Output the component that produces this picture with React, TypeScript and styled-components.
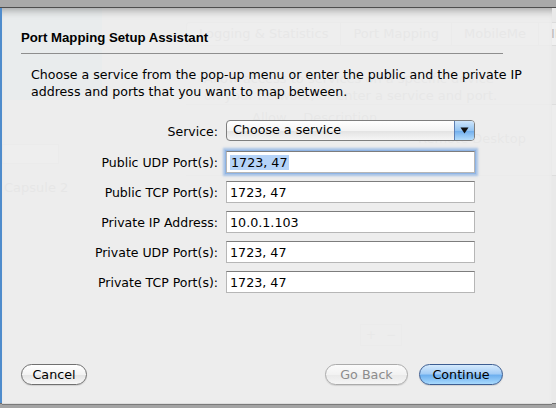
import React from 'react';
import styled, { createGlobalStyle } from 'styled-components';

const GlobalStyle = createGlobalStyle`
	html, body {
		margin: 0;
		padding: 0;
		background: #a4a4a4;
	}
	body {
		font-family: "DejaVu Sans", "Liberation Sans", sans-serif;
	}
`;

const Screen = styled.div`
	position: relative;
	width: 556px;
	height: 408px;
	overflow: hidden;
	background: #a4a4a4;
`;

/* the preferences window behind the sheet */
const BackWindow = styled.div`
	display: flex;
	flex-direction: column;
	width: 556px;
	height: 404px;
	background: #e9e9e9;
	border-bottom: 1px solid #6f6f6f;
	box-sizing: border-box;
`;

const Toolbar = styled.div`
	height: 7px;
	background: #a9a9a9;
	border-bottom: 1px solid #4e4e4e;
	flex: none;
`;

const BackBody = styled.div`
	display: flex;
	flex: 1;
`;

const Sidebar = styled.div`
	width: 100px;
	flex: none;
	display: flex;
	flex-direction: column;
	border-left: 2px solid #4f8ccc;
	font-size: 12px;
	color: #a8a8a8;
`;

const SidebarSelected = styled.div`
	height: 92px;
	background: #cfe0ee;
`;

const SidebarItem = styled.div`
	height: 18px;
	margin: 44px 0 0 0;
	width: 55px;
	border: 1px solid #dadada;
	background: #f6f6f6;
`;

const SidebarLabel = styled.div`
	margin-top: 16px;
	padding-left: 2px;
	font-size: 13px;
	color: #b4b4b4;
	white-space: nowrap;
`;

const BackMain = styled.div`
	flex: 1;
	display: flex;
	flex-direction: column;
	padding: 14px 0 0 84px;
	font-size: 13px;
	color: #bababa;
`;

const Tabs = styled.div`
	display: flex;
	height: 22px;
	border: 1px solid #dcdcdc;
	border-right: none;
	border-radius: 4px 0 0 4px;
	background: #f0f0f0;
`;

const Tab = styled.div`
	padding: 3px 12px 0 12px;
	border-right: 1px solid #dcdcdc;
	white-space: nowrap;
`;

const BackText = styled.div`
	margin-top: 24px;
	padding-left: 18px;
	line-height: 17px;
	white-space: nowrap;
`;

const BackTable = styled.div`
	margin: 0;
	height: 72px;
	border-top: 1px solid #dedede;
	border-bottom: 1px solid #dedede;
	background: #ededed;
	padding: 2px 0 0 66px;
	line-height: 21px;
	white-space: nowrap;
	box-sizing: border-box;
`;

const TableCell = styled.div<{ $indent: number }>`
	padding-left: ${p => p.$indent}px;
`;

const BackPlusMinus = styled.div`
	display: flex;
	margin: 148px 0 0 174px;
	width: 40px;
	height: 20px;
	border: 1px solid #dcdcdc;
	color: #c4c4c4;
	font-size: 12px;
	justify-content: space-around;
	align-items: center;
`;

/* the sheet itself */
const Sheet = styled.div`
	position: absolute;
	top: 8px;
	left: 2px;
	width: 550px;
	height: 396px;
	display: flex;
	flex-direction: column;
	background: rgba(237, 237, 237, 0.88);
	box-shadow: inset 0 9px 8px -7px rgba(0, 0, 0, 0.35), 0 1px 0 #7a7a7a;
	box-sizing: border-box;
	padding: 22px 0 0 19px;
	color: #000;
	font-size: 13px;
`;

const Title = styled.div`
	font-family: "Liberation Sans", Arial, sans-serif;
	font-weight: bold;
	font-size: 13.2px;
	line-height: 16px;
`;

const Rule = styled.div`
	margin-top: 7px;
	width: 482px;
	height: 1px;
	background: #8e8e8e;
`;

const Description = styled.p`
	margin: 12px 0 0 10px;
	line-height: 17px;
	font-size: 12.6px;
`;

const Form = styled.div`
	display: grid;
	grid-template-columns: 197px 249px;
	column-gap: 8px;
	row-gap: 8px;
	margin-top: 20px;
	align-items: center;
`;

const Label = styled.label`
	text-align: right;
	font-size: 12.5px;
	white-space: nowrap;
`;

const Popup = styled.div`
	display: flex;
	height: 21px;
	border: 1px solid #7e7e7e;
	border-radius: 4px;
	overflow: hidden;
	box-sizing: border-box;
	margin-bottom: 2px;
	background: linear-gradient(#ffffff, #f4f4f4 50%, #e2e2e2 51%, #f6f6f6);
`;

const PopupText = styled.div`
	flex: 1;
	padding: 1px 0 0 6px;
	font-size: 12.7px;
`;

const PopupArrow = styled.div`
	width: 19px;
	display: flex;
	align-items: center;
	justify-content: center;
	border-left: 1px solid #5d7fb3;
	background: linear-gradient(#cfe6fb, #94c4f2 50%, #6eacec 51%, #b4dcfb);
`;

const Field = styled.div<{ $focused?: boolean }>`
	height: 22px;
	box-sizing: border-box;
	background: #fff;
	border: 1px solid #b6b6b6;
	border-top-color: #7d7d7d;
	padding: 2px 0 0 3px;
	font-size: 12.7px;
	line-height: 17px;
	box-shadow: ${p => (p.$focused ? '0 0 0 1px #8fb4e4, 0 0 2px 3px rgba(110, 160, 225, 0.55)' : 'none')};
`;

const Selected = styled.span`
	background: #b5d3f8;
	padding: 0 1px;
`;

const Footer = styled.div`
	display: flex;
	align-items: center;
	margin-top: auto;
	margin-bottom: 19px;
	width: 482px;
`;

const Spacer = styled.div`
	flex: 1;
`;

const Button = styled.button<{ $kind?: 'default' | 'disabled' }>`
	height: 21px;
	box-sizing: border-box;
	border-radius: 11px;
	font-family: "DejaVu Sans", "Liberation Sans", sans-serif;
	font-size: 12.7px;
	padding: 0;
	color: ${p => (p.$kind === 'disabled' ? '#8c8c8c' : '#000')};
	border: 1px solid ${p => (p.$kind === 'default' ? '#3d5e92' : p.$kind === 'disabled' ? '#ababab' : '#707070')};
	background: ${p =>
		p.$kind === 'default'
			? 'linear-gradient(#d6ebfd, #a4cdf6 45%, #6eb0ef 55%, #a9dafd)'
			: p.$kind === 'disabled'
				? 'linear-gradient(#fbfbfb, #f2f2f2 50%, #e9e9e9 51%, #f5f5f5)'
				: 'linear-gradient(#ffffff, #f3f3f3 50%, #e3e3e3 51%, #f8f8f8)'};
	box-shadow: 0 1px 1px rgba(0, 0, 0, 0.12);
`;

const CancelButton = styled(Button)`
	width: 66px;
`;

const BackButton = styled(Button)`
	width: 83px;
	margin-right: 11px;
`;

const ContinueButton = styled(Button)`
	width: 84px;
`;

const DownArrow = () => (
	<svg width="9" height="7" viewBox="0 0 9 7">
		<path d="M0.5 0.5 H8.5 L4.5 6.5 Z" fill="#111" />
	</svg>
);

const fields = [
	{ label: 'Public UDP Port(s):', value: '1723, 47', focused: true },
	{ label: 'Public TCP Port(s):', value: '1723, 47' },
	{ label: 'Private IP Address:', value: '10.0.1.103' },
	{ label: 'Private UDP Port(s):', value: '1723, 47' },
	{ label: 'Private TCP Port(s):', value: '1723, 47' },
];

const App = () => (
	<Screen>
		<GlobalStyle />
		<BackWindow>
			<Toolbar />
			<BackBody>
				<Sidebar>
					<SidebarSelected />
					<SidebarItem />
					<SidebarLabel>Capsule 2</SidebarLabel>
				</Sidebar>
				<BackMain>
					<Tabs>
						<Tab>Logging &amp; Statistics</Tab>
						<Tab>Port Mapping</Tab>
						<Tab>MobileMe</Tab>
						<Tab>IPv6</Tab>
					</Tabs>
					<BackText>
						Allow access to services on a specific device
						<br />
						on your network, or enter a service and port.
					</BackText>
					<BackTable>
						<TableCell $indent={0}>Allow &nbsp;&nbsp; Description</TableCell>
						<TableCell $indent={166}>Remote Desktop</TableCell>
					</BackTable>
					<BackPlusMinus>
						<span>+</span>
						<span>−</span>
					</BackPlusMinus>
				</BackMain>
			</BackBody>
		</BackWindow>

		<Sheet>
			<Title>Port Mapping Setup Assistant</Title>
			<Rule />
			<Description>
				Choose a service from the pop-up menu or enter the public and the private IP
				<br />
				address and ports that you want to map between.
			</Description>
			<Form>
				<Label>Service:</Label>
				<Popup>
					<PopupText>Choose a service</PopupText>
					<PopupArrow>
						<DownArrow />
					</PopupArrow>
				</Popup>
				{fields.map(f => (
					<React.Fragment key={f.label}>
						<Label>{f.label}</Label>
						<Field $focused={f.focused}>{f.focused ? <Selected>{f.value}</Selected> : f.value}</Field>
					</React.Fragment>
				))}
			</Form>
			<Footer>
				<CancelButton>Cancel</CancelButton>
				<Spacer />
				<BackButton $kind="disabled">Go Back</BackButton>
				<ContinueButton $kind="default">Continue</ContinueButton>
			</Footer>
		</Sheet>
	</Screen>
);

export default App;
